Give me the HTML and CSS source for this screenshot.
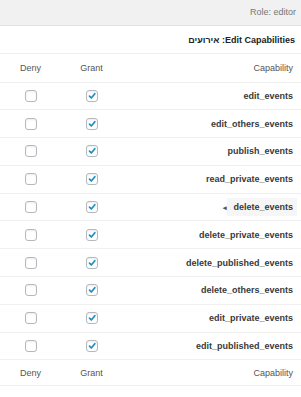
FILE: index.html
```html
<!DOCTYPE html>
<html lang="he" dir="rtl">
<head>
    <meta charset="UTF-8">
    <meta name="viewport" content="width=device-width, initial-scale=1.0">
    <title>Edit Capabilities</title>
    <link rel="stylesheet" href="styles.css">
</head>
<body>
    <div class="role-bar">Role: editor</div>

    <h2 class="caps-title">Edit Capabilities: אירועים</h2>

    <table class="caps">
        <thead>
            <tr>
                <th class="col-cap">Capability</th>
                <th class="col-box">Grant</th>
                <th class="col-box">Deny</th>
            </tr>
        </thead>
        <tbody>
            <tr>
                <td class="col-cap">edit_events</td>
                <td class="col-box"><span class="check checked"><svg viewBox="0 0 12 12"><path d="M3 6.2 L5.2 8.4 L9.4 3.2"/></svg></span></td>
                <td class="col-box"><span class="check"></span></td>
            </tr>
            <tr>
                <td class="col-cap">edit_others_events</td>
                <td class="col-box"><span class="check checked"><svg viewBox="0 0 12 12"><path d="M3 6.2 L5.2 8.4 L9.4 3.2"/></svg></span></td>
                <td class="col-box"><span class="check"></span></td>
            </tr>
            <tr>
                <td class="col-cap">publish_events</td>
                <td class="col-box"><span class="check checked"><svg viewBox="0 0 12 12"><path d="M3 6.2 L5.2 8.4 L9.4 3.2"/></svg></span></td>
                <td class="col-box"><span class="check"></span></td>
            </tr>
            <tr>
                <td class="col-cap">read_private_events</td>
                <td class="col-box"><span class="check checked"><svg viewBox="0 0 12 12"><path d="M3 6.2 L5.2 8.4 L9.4 3.2"/></svg></span></td>
                <td class="col-box"><span class="check"></span></td>
            </tr>
            <tr>
                <td class="col-cap"><span class="cap-hover">delete_events</span><span class="cap-arrow">◂</span></td>
                <td class="col-box"><span class="check checked"><svg viewBox="0 0 12 12"><path d="M3 6.2 L5.2 8.4 L9.4 3.2"/></svg></span></td>
                <td class="col-box"><span class="check"></span></td>
            </tr>
            <tr>
                <td class="col-cap">delete_private_events</td>
                <td class="col-box"><span class="check checked"><svg viewBox="0 0 12 12"><path d="M3 6.2 L5.2 8.4 L9.4 3.2"/></svg></span></td>
                <td class="col-box"><span class="check"></span></td>
            </tr>
            <tr>
                <td class="col-cap">delete_published_events</td>
                <td class="col-box"><span class="check checked"><svg viewBox="0 0 12 12"><path d="M3 6.2 L5.2 8.4 L9.4 3.2"/></svg></span></td>
                <td class="col-box"><span class="check"></span></td>
            </tr>
            <tr>
                <td class="col-cap">delete_others_events</td>
                <td class="col-box"><span class="check checked"><svg viewBox="0 0 12 12"><path d="M3 6.2 L5.2 8.4 L9.4 3.2"/></svg></span></td>
                <td class="col-box"><span class="check"></span></td>
            </tr>
            <tr>
                <td class="col-cap">edit_private_events</td>
                <td class="col-box"><span class="check checked"><svg viewBox="0 0 12 12"><path d="M3 6.2 L5.2 8.4 L9.4 3.2"/></svg></span></td>
                <td class="col-box"><span class="check"></span></td>
            </tr>
            <tr>
                <td class="col-cap">edit_published_events</td>
                <td class="col-box"><span class="check checked"><svg viewBox="0 0 12 12"><path d="M3 6.2 L5.2 8.4 L9.4 3.2"/></svg></span></td>
                <td class="col-box"><span class="check"></span></td>
            </tr>
        </tbody>
        <tfoot>
            <tr>
                <th class="col-cap">Capability</th>
                <th class="col-box">Grant</th>
                <th class="col-box">Deny</th>
            </tr>
        </tfoot>
    </table>
</body>
</html>
```

FILE: styles.css
```css
* {
    margin: 0;
    padding: 0;
    box-sizing: border-box;
}

body {
    font-family: 'Liberation Sans', Arial, sans-serif;
    font-size: 9px;
    color: #333;
    background: #fff;
}

/* Barre du role */
.role-bar {
    height: 26px;
    line-height: 25px;
    padding: 0 5px;
    background: #f1f1f1;
    border-bottom: 1px solid #e2e2e2;
    color: #777;
    font-size: 9px;
}

.caps-title {
    height: 28px;
    line-height: 28px;
    padding: 0 6px;
    font-size: 9px;
    font-weight: bold;
    color: #222;
    border-bottom: 1px solid #f0f0f0;
}

/* Tableau des capacites */
.caps {
    width: 100%;
    border-collapse: collapse;
}

.caps th,
.caps td {
    border-bottom: 1px solid #f0f0f0;
}

.caps th {
    height: 28px;
    font-weight: normal;
    color: #555;
}

.caps td {
    height: 27.8px;
}

.caps tfoot th {
    height: 26px;
}

.col-cap {
    text-align: right;
    padding-right: 8px;
}

.caps td.col-cap {
    font-weight: bold;
    color: #3a3a3a;
}

.col-box {
    width: 61px;
    text-align: center;
}

.check {
    display: inline-block;
    width: 12px;
    height: 12px;
    border: 1px solid #b4b9be;
    border-radius: 3px;
    background: #fff;
    vertical-align: middle;
    box-shadow: inset 0 1px 2px rgba(0, 0, 0, 0.08);
}

.check svg {
    display: block;
    width: 10px;
    height: 10px;
}

.check svg path {
    fill: none;
    stroke: #1e8cbe;
    stroke-width: 2;
    stroke-linecap: round;
    stroke-linejoin: round;
}

.cap-hover {
    display: inline-block;
    background: #f6f6f6;
    padding: 4px 4px 4px 6px;
    margin-right: -4px;
}

.cap-arrow {
    display: inline-block;
    font-size: 7px;
    color: #555;
    margin-left: 8px;
}
```
